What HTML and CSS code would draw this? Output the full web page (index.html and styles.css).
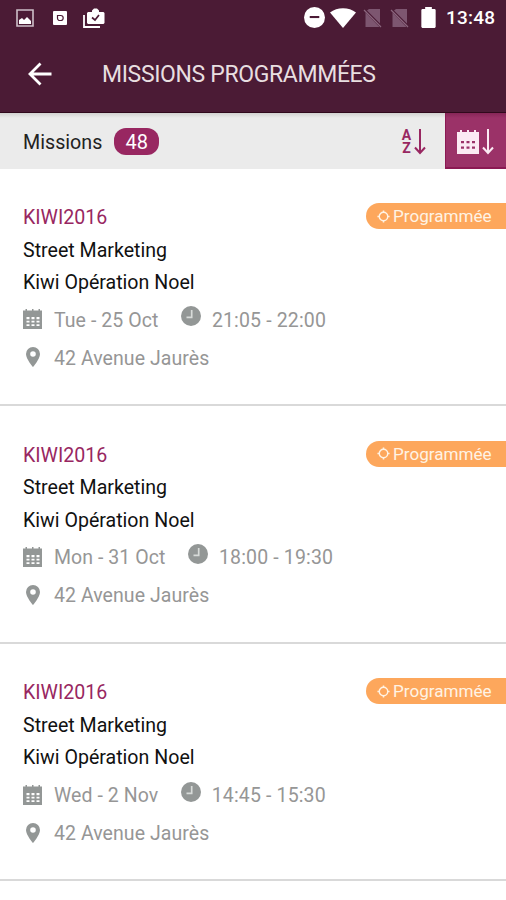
FILE: index.html
```html
<!DOCTYPE html>
<html lang="fr">
<head>
<meta charset="utf-8">
<title>Missions programmées</title>
<link rel="stylesheet" href="styles.css">
</head>
<body>
<svg class="defs" aria-hidden="true">
  <symbol id="calendar" viewBox="0 0 20 20">
    <path fill="currentColor" fill-rule="evenodd" d="M0 1.500h2.500V0h1.500v1.500h5V0h1.500v1.500h5V0h1.500v1.500h2V20H0zM3.500 8v2.200h3V8zm5 0v2.200h3V8zm5 0v2.200h3V8zM3.500 11.800v1.700h3v-1.700zm5 0v1.700h3v-1.700zm5 0v1.700h3v-1.700zM3.500 15.200v1.700h3v-1.700zm5 0v1.700h3v-1.700zm5 0v1.700h3v-1.700z"/>
  </symbol>
  <symbol id="clock" viewBox="0 0 20 20">
    <circle cx="10" cy="10" r="10" fill="currentColor"/>
    <path d="M10.700 4v7.300H5.500" fill="none" stroke="#d8dbd9" stroke-width="1.700"/>
  </symbol>
  <symbol id="pin" viewBox="0 0 14 20">
    <path fill="currentColor" fill-rule="evenodd" d="M7 0a7 7 0 0 1 7 7c0 5-7 13-7 13S0 12 0 7a7 7 0 0 1 7-7zm0 4.200a2.800 2.800 0 1 0 0 5.600 2.800 2.800 0 0 0 0-5.600z"/>
  </symbol>
  <symbol id="target" viewBox="0 0 12 12">
    <circle cx="6" cy="6" r="3.900" fill="none" stroke="currentColor" stroke-width="1.300"/>
    <path d="M6 0.400v2M6 9.600v2M0.400 6h2M9.600 6h2" stroke="currentColor" stroke-width="1.400"/>
  </symbol>
  <symbol id="nosim" viewBox="0 0 20 20">
    <path fill="#7d5670" d="M6 1h11v14.500L4 2.500zM2.500 4.500L16 18.500V19H2.500z"/>
    <path d="M1 2l17 17" stroke="#8a657d" stroke-width="1.300"/>
  </symbol>
  <symbol id="down" viewBox="0 0 12 26">
    <path d="M6 0v24M1 18.500l5 5.500 5-5.500" fill="none" stroke="currentColor" stroke-width="2"/>
  </symbol>
</svg>

<header class="top">
  <div class="status">
    <svg class="s-image" viewBox="0 0 18 18"><path d="M1 1h16v16H1z" fill="none" stroke="#cdbfc8" stroke-width="1.600"/><path fill="#fff" d="M3 15v-4l3-2 2 2 3-3 4 4v3z"/></svg>
    <svg class="s-box" viewBox="0 0 14 14"><rect width="14" height="14" rx="1" fill="#fff"/><path d="M4.500 4.500h3.200a2.300 2.300 0 0 1 0 5H7a2.300 2.300 0 0 1-2.500-2.500z" fill="none" stroke="#4b1b35" stroke-width="1.200"/></svg>
    <svg class="s-check" viewBox="0 0 22 20"><path fill="#fff" d="M5 4h4V2.500l2-2h3l2 2V4h4.500l1 1v10l-1 1H5l-1-1V5z"/><path d="M1 7v12h16" fill="none" stroke="#fff" stroke-width="1.800"/><path d="M9 9.500l3 2.500 4-5" fill="none" stroke="#4b1b35" stroke-width="1.700"/></svg>
    <svg class="s-dnd" viewBox="0 0 22 22"><circle cx="11" cy="11" r="11" fill="#fff"/><path d="M6 10.500h10" stroke="#4b1b35" stroke-width="2.200"/></svg>
    <svg class="s-wifi" viewBox="0 0 26 20"><path fill="#fff" d="M0 4.500C7-1.200 19-1.200 26 4.500L13 20z"/></svg>
    <svg class="s-sim"><use href="#nosim"/></svg>
    <svg class="s-sim s-sim2"><use href="#nosim"/></svg>
    <svg class="s-battery" viewBox="0 0 15 22"><path fill="#fff" d="M4 0h7v2h3l1 1v18l-1 1H1l-1-1V3l1-1h3z"/></svg>
    <span class="time">13:48</span>
  </div>
  <div class="bar">
    <svg class="back" viewBox="0 0 24 24"><path d="M23.500 12H2.500M12.500 1.500L2 12l10.500 10.500" fill="none" stroke="#fff" stroke-width="2.800"/></svg>
    <h1>MISSIONS PROGRAMMÉES</h1>
  </div>
</header>

<section class="tools">
  <span class="label">Missions</span>
  <span class="count">48</span>
  <div class="sort">
    <span class="az">A<br>Z</span>
    <svg class="arrow"><use href="#down"/></svg>
  </div>
  <div class="sort active">
    <svg class="cal" viewBox="0 0 22 24"><path fill="currentColor" fill-rule="evenodd" d="M0 2h3V0h2v2h5V0h2v2h5V0h2v2h3v22H0zM4 11v2.200h3V11zm5.500 0v2.200h3V11zm5.500 0v2.200h3V11zM4 16.500v2.200h3v-2.200zm5.500 0v2.200h3v-2.200zm5.500 0v2.200h3v-2.200z"/></svg>
    <svg class="arrow"><use href="#down"/></svg>
  </div>
</section>

<main>
  <article class="card">
    <span class="tag"><svg><use href="#target"/></svg><span>Programmée</span></span>
    <h2>KIWI2016</h2>
    <p class="kind">Street Marketing</p>
    <p class="name">Kiwi Opération Noel</p>
    <div class="meta"><svg class="m-cal"><use href="#calendar"/></svg><span>Tue - 25 Oct</span><svg class="m-clock"><use href="#clock"/></svg><span class="hours">21:05 - 22:00</span></div>
    <div class="meta"><svg class="m-pin"><use href="#pin"/></svg><span class="place">42 Avenue Jaurès</span></div>
  </article>
  <article class="card">
    <span class="tag"><svg><use href="#target"/></svg><span>Programmée</span></span>
    <h2>KIWI2016</h2>
    <p class="kind">Street Marketing</p>
    <p class="name">Kiwi Opération Noel</p>
    <div class="meta"><svg class="m-cal"><use href="#calendar"/></svg><span>Mon - 31 Oct</span><svg class="m-clock"><use href="#clock"/></svg><span class="hours">18:00 - 19:30</span></div>
    <div class="meta"><svg class="m-pin"><use href="#pin"/></svg><span class="place">42 Avenue Jaurès</span></div>
  </article>
  <article class="card">
    <span class="tag"><svg><use href="#target"/></svg><span>Programmée</span></span>
    <h2>KIWI2016</h2>
    <p class="kind">Street Marketing</p>
    <p class="name">Kiwi Opération Noel</p>
    <div class="meta"><svg class="m-cal"><use href="#calendar"/></svg><span>Wed - 2 Nov</span><svg class="m-clock"><use href="#clock"/></svg><span class="hours">14:45 - 15:30</span></div>
    <div class="meta"><svg class="m-pin"><use href="#pin"/></svg><span class="place">42 Avenue Jaurès</span></div>
  </article>
</main>
</body>
</html>
```

FILE: styles.css
```css
* { box-sizing: border-box; }
body {
  margin: 0;
  height: 900px;
  overflow: hidden;
  background: #fff;
  color: #111;
  font-family: Roboto, "Liberation Sans", sans-serif;
  font-size: 19.5px;
}
h1, h2, p { margin: 0; font-weight: 400; }
svg { display: block; flex: none; }
.defs { position: absolute; width: 0; height: 0; }

.top {
  height: 113px;
  background: #4b1b35;
  border-bottom: 1px solid #30091c;
}
.status {
  display: flex;
  align-items: center;
  height: 35px;
  padding: 0 11px 0 16px;
}
.s-image { width: 18px; height: 18px; }
.s-box { width: 14px; height: 14px; margin-left: 19px; }
.s-check { width: 22px; height: 20px; margin-left: 16px; }
.s-dnd { width: 21px; height: 21px; margin-left: auto; }
.s-wifi { width: 26px; height: 20px; margin-left: 5px; }
.s-sim { width: 20px; height: 20px; margin-left: 7px; }
.s-sim2 { margin-left: 7px; }
.s-battery { width: 15px; height: 21px; margin-left: 11px; }
.time {
  width: 49px;
  margin-left: 10px;
  color: #fff;
  font-size: 19px;
  font-weight: 500;
  letter-spacing: 0.2px;
  white-space: nowrap;
}
.bar {
  display: flex;
  align-items: center;
  height: 77px;
  padding-left: 28px;
}
.back { width: 24px; height: 24px; }
h1 {
  margin-left: 50px;
  padding-top: 2px;
  color: #e8dfe0;
  font-size: 23px;
  letter-spacing: -0.36px;
}

.tools {
  display: flex;
  align-items: center;
  height: 56px;
  padding-left: 23px;
  background: linear-gradient(#d2d2d0, #ebebeb 5px);
}
.label { font-size: 19.7px; color: #222; padding-top: 2px; }
.count {
  width: 45px;
  height: 27px;
  margin-left: 12px;
  border-radius: 12px;
  background: #982761;
  color: #fff;
  font-size: 20px;
  line-height: 28px;
  text-align: center;
}
.sort {
  display: flex;
  align-items: center;
  height: 56px;
  margin-left: auto;
  padding: 2px 19px 0 0;
  color: #982761;
}
.sort .arrow { width: 12px; height: 26px; }
.az {
  width: 11px;
  margin-right: 2px;
  font-size: 14px;
  font-weight: 700;
  line-height: 13px;
  text-align: center;
}
.sort.active {
  width: 61px;
  margin-left: 0;
  padding: 3px 0 0 11px;
  gap: 3px;
  background: linear-gradient(#862657, #9b3268 5px);
  border-left: 1px solid #8b1953;
  border-bottom: 2px solid #8b1953;
  color: #fbeaf3;
}
.cal { width: 22px; height: 24px; }

.card {
  position: relative;
  height: 237.67px;
  padding: 33px 0 0 23px;
}
.card::after {
  content: "";
  position: absolute;
  left: 0;
  right: 0;
  bottom: 0.5px;
  height: 2px;
  background: #d9d9d9;
}
.card h2, .card p { height: 32.5px; line-height: 32.5px; font-size: 19.6px; }
.card h2 { color: #982761; }
.kind, .name { color: #111; }
.tag {
  position: absolute;
  top: 34px;
  right: 0;
  display: flex;
  align-items: center;
  width: 140px;
  height: 26px;
  padding-left: 11px;
  gap: 4px;
  border-radius: 13px 0 0 13px;
  background: #fda75c;
  color: #fff3e4;
  font-size: 17.1px;
}
.tag svg { width: 13px; height: 13px; margin-right: -1px; }
.meta {
  display: flex;
  align-items: center;
  height: 38px;
  color: #939796;
}
.name + .meta { margin-top: 1.8px; }
.meta span { color: #969696; white-space: nowrap; letter-spacing: 0.06px; }
.m-cal { width: 20px; height: 20px; margin: 0 11px 2px 0; }
.m-clock { width: 20px; height: 20px; margin: 0 11px 8px 22.5px; }
.meta .hours { letter-spacing: 0.15px; }
.m-pin { width: 14px; height: 20px; margin: 0 14px 2px 3px; }
```
